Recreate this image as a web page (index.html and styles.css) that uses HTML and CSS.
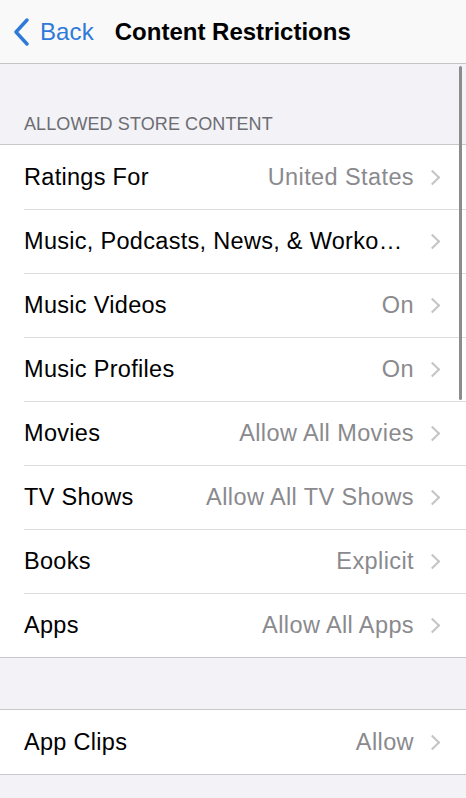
FILE: index.html
```html
<!DOCTYPE html>
<html>
<head>
<meta charset="utf-8">
<link rel="stylesheet" href="styles.css">
</head>
<body>
<div class="screen">
  <header class="nav">
    <div class="back">
      <svg class="back-icon" width="20" height="28" viewBox="0 0 20 28"><path d="M15 2 L4 14 L15 26" fill="none" stroke="#2f7ad9" stroke-width="3.4" stroke-linecap="round" stroke-linejoin="round"/></svg>
      <span class="back-text">Back</span>
    </div>
    <div class="title">Content Restrictions</div>
  </header>
  <div class="content">
    <div class="section-header">ALLOWED STORE CONTENT</div>
    <div class="group">
      <div class="row"><span class="label">Ratings For</span><span class="value">United States</span><span class="chev"></span></div>
      <div class="row"><span class="label trunc">Music, Podcasts, News, &amp; Workouts</span><span class="chev"></span></div>
      <div class="row"><span class="label">Music Videos</span><span class="value">On</span><span class="chev"></span></div>
      <div class="row"><span class="label">Music Profiles</span><span class="value">On</span><span class="chev"></span></div>
      <div class="row"><span class="label">Movies</span><span class="value">Allow All Movies</span><span class="chev"></span></div>
      <div class="row"><span class="label">TV Shows</span><span class="value">Allow All TV Shows</span><span class="chev"></span></div>
      <div class="row"><span class="label">Books</span><span class="value">Explicit</span><span class="chev"></span></div>
      <div class="row"><span class="label">Apps</span><span class="value">Allow All Apps</span><span class="chev"></span></div>
    </div>
    <div class="spacer"></div>
    <div class="group">
      <div class="row"><span class="label">App Clips</span><span class="value">Allow</span><span class="chev"></span></div>
    </div>
  </div>
  <div class="scrollbar"></div>
</div>
</body>
</html>
```
FILE: styles.css
```css
* { box-sizing: border-box; }
html, body { margin: 0; padding: 0; }
body {
  width: 466px;
  height: 798px;
  overflow: hidden;
  background: #f2f2f7;
  font-family: "Liberation Sans", Arial, sans-serif;
}
.screen { position: relative; width: 466px; height: 798px; }
.nav {
  height: 64px;
  background: #f9f9f9;
  border-bottom: 1px solid #c6c6c8;
  display: flex;
  align-items: center;
  padding-left: 12px;
}
.back { display: flex; align-items: center; color: #2f7ad9; }
.back-icon { display: block; margin-top: 1px; }
.back-text { font-size: 24px; margin-left: 8px; letter-spacing: 0.1px; }
.title {
  font-size: 24px;
  font-weight: bold;
  color: #000;
  margin-left: 21px;
}
.content { padding-top: 49px; }
.section-header {
  font-size: 18px;
  color: #6d6d72;
  padding-left: 24px;
  padding-top: 1px;
  height: 31px;
  letter-spacing: 0.1px;
}
.group {
  background: #fff;
  border-top: 1px solid #c8c7cc;
  border-bottom: 1px solid #c8c7cc;
}
.row {
  height: 64px;
  display: flex;
  align-items: center;
  padding-left: 24px;
  padding-right: 28px;
  position: relative;
  font-size: 23.5px;
  letter-spacing: 0.3px;
}
.row + .row::before {
  content: "";
  position: absolute;
  top: 0; left: 24px; right: 0;
  height: 1px;
  background: #dcdbe0;
}
.label { color: #000; flex: 0 0 auto; white-space: nowrap; }
.label.trunc { flex: 0 1 auto; max-width: 384px; min-width: 0; overflow: hidden; text-overflow: ellipsis; }
.value { margin-left: auto; color: #8a8a8e; white-space: nowrap; letter-spacing: 0.4px; }
.chev {
  width: 11px; height: 11px;
  border-top: 2.3px solid #c4c4c7;
  border-right: 2.3px solid #c4c4c7;
  transform: rotate(45deg);
  margin-left: 13px;
  flex: 0 0 auto;
}
.label.trunc + .chev { margin-left: auto; }
.spacer { height: 51px; }
.scrollbar {
  position: absolute;
  left: 459px;
  top: 66px;
  width: 3px;
  height: 334px;
  border-radius: 2px;
  background: #8c8c8c;
}
```
